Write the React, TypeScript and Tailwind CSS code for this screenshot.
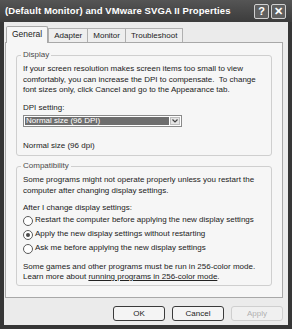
import React from "react";

const font = { fontFamily: '"Liberation Sans", Arial, sans-serif' };

const Radio: React.FC<{ checked?: boolean; label: string }> = ({ checked, label }) => (
  <div className="flex items-center gap-[2px] h-[14px]">
    <span className="w-[10px] h-[10px] rounded-full border border-[#5a5a5a] bg-white flex items-center justify-center">
      {checked && <span className="w-[4px] h-[4px] rounded-full bg-[#4a4a4a]" />}
    </span>
    <span>{label}</span>
  </div>
);

const Group: React.FC<{ title: string; className?: string; children: React.ReactNode }> = ({ title, className, children }) => (
  <div className={`relative border border-[#cfcfcf] rounded-[3px] ${className ?? ""}`}>
    <span className="absolute -top-[6px] left-[4px] px-[2px] bg-[#f6f6f6] text-[#4a4a4a] leading-[10px]">{title}</span>
    {children}
  </div>
);

const Button: React.FC<{ label: string; disabled?: boolean }> = ({ label, disabled }) => (
  <div
    className={`w-[52px] h-[15px] rounded-[3px] border flex items-center justify-center ${
      disabled ? "border-[#cfcfcf] text-[#b0b0b0] bg-[#f0f0f0]" : "border-[#3a3a3a] text-[#222] bg-[#f4f4f4]"
    }`}
  >
    {label}
  </div>
);

export default function App() {
  return (
    <div className="w-[292px] h-[329px] bg-[#363636] flex flex-col text-[8px] text-[#222]" style={font}>
      {/* title bar */}
      <div className="h-[22px] flex items-center justify-between pl-[5px] pr-[6px] bg-gradient-to-b from-[#555] to-[#3c3c3c]">
        <span className="text-white font-bold text-[9.5px] tracking-[0.1px]">(Default Monitor) and VMware SVGA II Properties</span>
        <div className="flex gap-[2px]">
          <div className="w-[15px] h-[15px] rounded-[2px] border border-[#d0d0d0] bg-[#606060] text-white font-bold text-[11px] flex items-center justify-center leading-none">?</div>
          <div className="w-[15px] h-[15px] rounded-[2px] border border-[#d0d0d0] bg-[#606060] text-white font-bold text-[11px] flex items-center justify-center leading-none">✕</div>
        </div>
      </div>

      {/* client area */}
      <div className="flex-1 mx-[4px] mb-[4px] bg-[#ebebeb] flex flex-col pl-[1px] pr-[5px] pt-[3px]">
        <div className="flex items-end h-[17px]">
          <div className="h-[17px] px-[5px] ml-[1px] bg-[#f6f6f6] border border-b-0 border-[#a8a8a8] rounded-t-[2px] flex items-center text-[8.5px] relative z-10 -mb-px pb-px">General</div>
          <div className="h-[14px] px-[5px] bg-[#eeeeee] border border-b-0 border-[#b0b0b0] flex items-center">Adapter</div>
          <div className="h-[14px] px-[5px] bg-[#eeeeee] border border-b-0 border-l-0 border-[#b0b0b0] flex items-center">Monitor</div>
          <div className="h-[14px] px-[5px] bg-[#eeeeee] border border-b-0 border-l-0 border-[#b0b0b0] flex items-center">Troubleshoot</div>
        </div>

        <div className="h-[256px] bg-[#f6f6f6] border border-[#a8a8a8] px-[10px] pt-[12px] flex flex-col">
          <Group title="Display" className="h-[101px] px-[6px] pt-[8px] leading-[10.5px]">
            <p>If your screen resolution makes screen items too small to view comfortably, you can increase the DPI to compensate.&nbsp; To change font sizes only, click Cancel and go to the Appearance tab.</p>
            <p className="mt-[7px]">DPI setting:</p>
            <div className="mt-[2px] w-[159px] h-[12px] border border-[#8a8a8a] bg-white flex p-[1px]">
              <div className="flex-1 bg-[#6e6e6e] text-white flex items-center pl-[1px]">Normal size (96 DPI)</div>
              <div className="w-[10px] ml-[1px] bg-[#e4e4e4] border border-[#bdbdbd] flex items-center justify-center">
                <svg width="6" height="4" viewBox="0 0 6 4"><path d="M0.5 0.5 L3 3 L5.5 0.5" stroke="#444" strokeWidth="1.2" fill="none" /></svg>
              </div>
            </div>
            <p className="mt-[14px]">Normal size (96 dpi)</p>
          </Group>

          <Group title="Compatibility" className="mt-[10px] h-[120px] px-[6px] pt-[8px] leading-[10.5px]">
            <p>Some programs might not operate properly unless you restart the computer after changing display settings.</p>
            <p className="mt-[7px]">After I change display settings:</p>
            <Radio label="Restart the computer before applying the new display settings" />
            <Radio checked label="Apply the new display settings without restarting" />
            <Radio label="Ask me before applying the new display settings" />
            <p className="mt-[6px]">Some games and other programs must be run in 256-color mode.</p>
            <p>
              Learn more about <span className="underline">running programs in 256-color mode</span>.
            </p>
          </Group>
        </div>

        <div className="flex justify-end gap-[7px] mt-[8px]">
          <Button label="OK" />
          <Button label="Cancel" />
          <Button label="Apply" disabled />
        </div>
      </div>
    </div>
  );
}
